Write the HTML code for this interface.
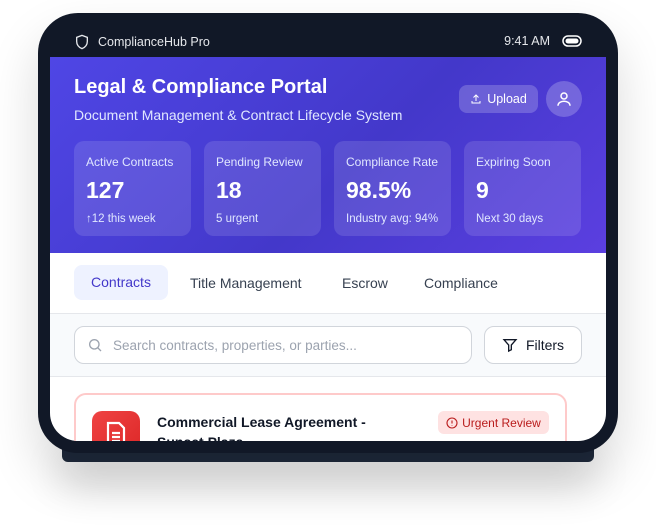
<!DOCTYPE html>
<html><head><style>
*{margin:0;padding:0;box-sizing:border-box}
body{width:656px;height:525px;background:#fff;font-family:"Liberation Sans",sans-serif;position:relative;overflow:hidden}
.base{position:absolute;left:62px;top:440px;width:532px;height:22px;background:#1e293b;border-radius:0 0 6px 6px;box-shadow:0 20px 40px rgba(0,0,0,.18)}
.frame{position:absolute;left:38px;top:13px;width:580px;height:440px;background:#111827;border-radius:40px;box-shadow:0 25px 50px rgba(0,0,0,.15)}
.screen{position:absolute;left:50px;top:57px;width:556px;height:384px;background:#fff;border-radius:0 0 28px 28px;overflow:hidden}
.sb{position:absolute;left:74px;top:34px;color:#e5e7eb;font-size:12.5px;display:flex;align-items:center;gap:8px}
.time{position:absolute;right:74px;top:34px;color:#e5e7eb;font-size:12.5px;display:flex;align-items:center;gap:12px}
.hdr{position:absolute;left:0;top:0;width:556px;height:196px;background:linear-gradient(135deg,#4f46e5,#4338ca 55%,#5b3fe0)}
.t1{position:absolute;left:24px;top:19px;color:#fff;font-size:20px;font-weight:bold}
.t2{position:absolute;left:24px;top:50px;color:#e0e7ff;font-size:14px}
.up{position:absolute;left:409px;top:28px;width:79px;height:28px;border-radius:8px;background:rgba(255,255,255,.2);color:#fff;font-size:12.5px;display:flex;align-items:center;justify-content:center;gap:5px}
.av{position:absolute;left:496px;top:24px;width:36px;height:36px;border-radius:50%;background:rgba(255,255,255,.22);display:flex;align-items:center;justify-content:center}
.card{position:absolute;top:84px;width:117px;height:95px;border-radius:10px;background:rgba(255,255,255,.12);color:#fff;padding:14px 12px}
.card .l{font-size:12px;color:#e0e7ff}
.card .v{font-size:23px;font-weight:bold;margin-top:8px}
.card .s{font-size:11.5px;color:#e0e7ff;margin-top:9px}
.tabs{position:absolute;top:196px;left:0;width:556px;height:61px;border-bottom:1px solid #e5e7eb;font-size:14px;color:#374151}
.tab{position:absolute;top:13px;height:35px;line-height:35px}
.srch{position:absolute;top:257px;left:0;width:556px;height:63px;background:#f8fafc;border-bottom:1px solid #e5e7eb}
.inp{position:absolute;left:24px;top:12px;width:398px;height:38px;border:1px solid #d1d5db;border-radius:10px;background:#fff;font-size:13.5px;color:#9ca3af;display:flex;align-items:center;padding-left:12px;gap:10px}
.flt{position:absolute;left:434px;top:12px;width:98px;height:38px;border:1px solid #d1d5db;border-radius:10px;background:#fff;font-size:14px;color:#111827;display:flex;align-items:center;justify-content:center;gap:8px}
.doc{position:absolute;left:24px;top:336px;width:493px;height:80px;border:2px solid #fecaca;border-radius:12px;background:#fff}
.ic{position:absolute;left:16px;top:16px;width:48px;height:48px;border-radius:10px;background:linear-gradient(135deg,#ef4444,#dc2626);display:flex;justify-content:center;padding-top:10px}
.dt{position:absolute;left:81px;top:17px;font-size:14px;font-weight:bold;color:#111827;line-height:20px;width:240px}
.bd{position:absolute;left:362px;top:16px;width:111px;height:23px;border-radius:6px;background:#fee2e2;color:#b91c1c;font-size:12px;display:flex;align-items:center;justify-content:center;gap:4px}
</style></head><body>
<div class="base"></div>
<div class="frame"></div>
<div class="sb"><svg width="16" height="16" viewBox="0 0 24 24" fill="none" stroke="#e5e7eb" stroke-width="2"><path d="M12 2l8 3v6c0 5-3.5 9-8 11-4.5-2-8-6-8-11V5z"/></svg>ComplianceHub Pro</div>
<div class="time">9:41 AM<svg width="20" height="12" viewBox="0 0 20 12"><rect x="1" y="1" width="18" height="10" rx="5" fill="none" stroke="#fff" stroke-width="1.5"/><rect x="3.5" y="3.5" width="13" height="5" rx="2.5" fill="#fff"/></svg></div>
<div class="screen">
<div class="hdr">
<div class="t1">Legal &amp; Compliance Portal</div>
<div class="t2">Document Management &amp; Contract Lifecycle System</div>
<div class="up"><svg width="12" height="12" viewBox="0 0 24 24" fill="none" stroke="#fff" stroke-width="2"><path d="M4 16v4h16v-4M12 16V4M7 9l5-5 5 5"/></svg>Upload</div>
<div class="av"><svg width="18" height="18" viewBox="0 0 24 24" fill="none" stroke="#fff" stroke-width="2"><circle cx="12" cy="8" r="4"/><path d="M4 21c0-4 4-6 8-6s8 2 8 6"/></svg></div>
<div class="card" style="left:24px"><div class="l">Active Contracts</div><div class="v">127</div><div class="s">↑12 this week</div></div>
<div class="card" style="left:154px"><div class="l">Pending Review</div><div class="v">18</div><div class="s">5 urgent</div></div>
<div class="card" style="left:284px"><div class="l">Compliance Rate</div><div class="v">98.5%</div><div class="s">Industry avg: 94%</div></div>
<div class="card" style="left:414px"><div class="l">Expiring Soon</div><div class="v">9</div><div class="s">Next 30 days</div></div>
</div>
<div class="tabs">
<div class="tab" style="left:24px;width:94px;background:#eef2ff;border-radius:8px;color:#4338ca;text-align:center;top:12px">Contracts</div>
<div class="tab" style="left:140px">Title Management</div>
<div class="tab" style="left:292px">Escrow</div>
<div class="tab" style="left:374px">Compliance</div>
</div>
<div class="srch">
<div class="inp"><svg width="16" height="16" viewBox="0 0 24 24" fill="none" stroke="#9ca3af" stroke-width="2"><circle cx="11" cy="11" r="7"/><path d="M21 21l-5-5"/></svg>Search contracts, properties, or parties...</div>
<div class="flt"><svg width="16" height="16" viewBox="0 0 24 24" fill="none" stroke="#111827" stroke-width="2"><path d="M3 4h18l-7 8v7l-4 2v-9z"/></svg>Filters</div>
</div>
<div class="doc">
<div class="ic"><svg width="20" height="26" viewBox="0 0 20 26" fill="none" stroke="#fff" stroke-width="2.2"><path d="M2 2h11l5 5v17H2z"/><path d="M6 12h8M6 16h8M6 20h8"/></svg></div>
<div class="dt">Commercial Lease Agreement - Sunset Plaza</div>
<div class="bd"><svg width="12" height="12" viewBox="0 0 24 24" fill="none" stroke="#b91c1c" stroke-width="2.2"><circle cx="12" cy="12" r="10"/><path d="M12 7v6M12 16v1"/></svg>Urgent Review</div>
</div>
</div>
</body></html>
